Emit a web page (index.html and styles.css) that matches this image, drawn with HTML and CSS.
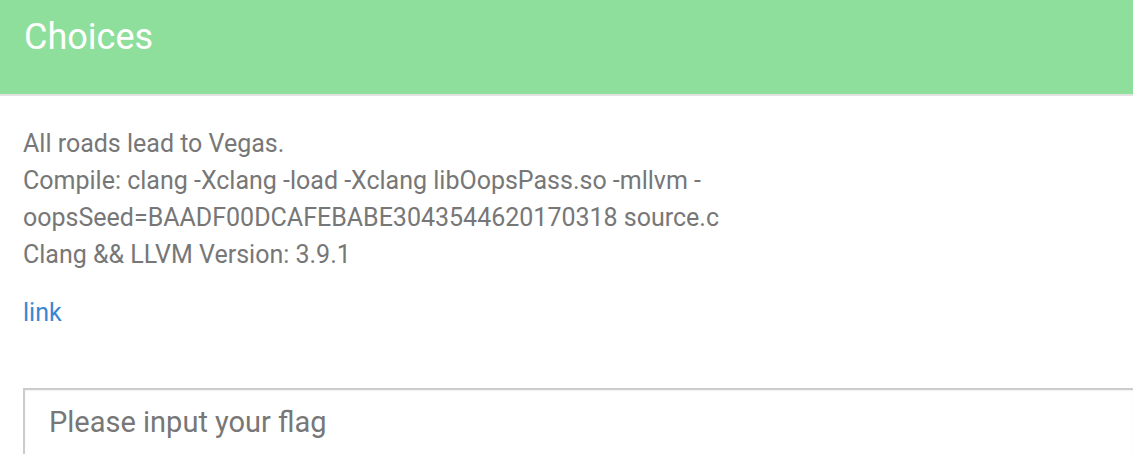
FILE: index.html
```html
<!DOCTYPE html>
<html>
<head>
<meta charset="utf-8">
<link rel="stylesheet" href="styles.css">
</head>
<body>
<header class="panel-heading">
  <h1 class="panel-title">Choices</h1>
</header>
<main class="panel-body">
  <p class="desc">All roads lead to Vegas.<br>Compile: clang -Xclang -load -Xclang libOopsPass.so -mllvm -<br>oopsSeed=BAADF00DCAFEBABE3043544620170318 source.c<br>Clang &amp;&amp; LLVM Version: 3.9.1</p>
  <p class="link-row"><a class="link" href="#">link</a></p>
  <div class="flag-form">
    <input class="flag-input" type="text" placeholder="Please input your flag">
  </div>
</main>
</body>
</html>
```

FILE: styles.css
```css
html, body {
  margin: 0;
  padding: 0;
  overflow: hidden;
  background: #ffffff;
  font-family: Roboto, "Noto Sans", sans-serif;
}

.panel-heading {
  background: #8fdf9c;
  height: 94px;
  border-bottom: 2px solid #e2e2e2;
  padding: 0 24px;
  box-sizing: content-box;
}

.panel-title {
  margin: 0;
  padding-top: 15px;
  font-size: 36px;
  font-weight: 400;
  line-height: 44px;
  color: #ffffff;
}

.panel-body {
  padding: 0 0 0 23px;
}

.desc {
  margin: 29px 0 0;
  font-size: 25px;
  line-height: 37px;
  color: #777777;
}

.link-row {
  margin: 21px 0 0;
  font-size: 25px;
  line-height: 37px;
}

.link {
  color: #3a87d4;
  text-decoration: none;
}

.flag-form {
  margin-top: 57px;
}

.flag-input {
  display: block;
  width: 100%;
  box-sizing: border-box;
  height: 66px;
  padding: 15px 0 15px 24px;
  line-height: 34px;
  border: 2px solid #cccccc;
  border-right: 0;
  border-bottom: 0;
  box-shadow: inset 0 1px 2px rgba(0,0,0,0.06);
  font-family: Roboto, "Noto Sans", sans-serif;
  font-size: 29px;
  color: #555555;
  outline: none;
}

.flag-input::placeholder {
  color: #777777;
}
```
